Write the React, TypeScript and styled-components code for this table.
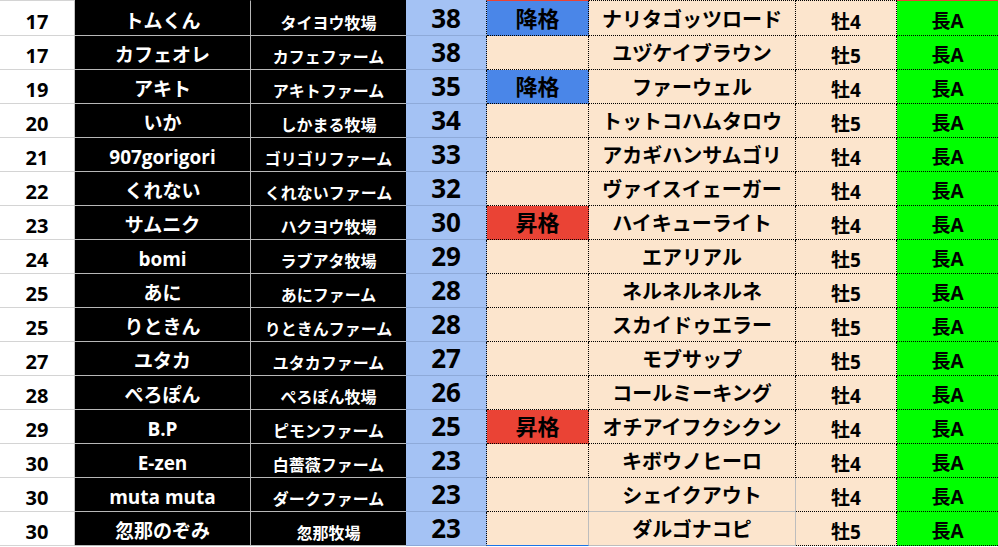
import React from "react";
import styled, { createGlobalStyle, css } from "styled-components";

const GlobalStyle = createGlobalStyle`
  html, body { margin: 0; padding: 0; background: #ffffff; }
  #root { width: 998px; }
`;

type Status = "up" | "down" | undefined;

interface Row {
  rank: number;
  name: string;
  farm: string;
  score: number;
  status?: Status;
  horse: string;
  age: string;
  grade: string;
}

const rows: Row[] = [
  { rank: 17, name: "トムくん", farm: "タイヨウ牧場", score: 38, status: "down", horse: "ナリタゴッツロード", age: "牡4", grade: "長A" },
  { rank: 17, name: "カフェオレ", farm: "カフェファーム", score: 38, horse: "ユヅケイブラウン", age: "牡5", grade: "長A" },
  { rank: 19, name: "アキト", farm: "アキトファーム", score: 35, status: "down", horse: "ファーウェル", age: "牡4", grade: "長A" },
  { rank: 20, name: "いか", farm: "しかまる牧場", score: 34, horse: "トットコハムタロウ", age: "牡5", grade: "長A" },
  { rank: 21, name: "907gorigori", farm: "ゴリゴリファーム", score: 33, horse: "アカギハンサムゴリ", age: "牡4", grade: "長A" },
  { rank: 22, name: "くれない", farm: "くれないファーム", score: 32, horse: "ヴァイスイェーガー", age: "牡4", grade: "長A" },
  { rank: 23, name: "サムニク", farm: "ハクヨウ牧場", score: 30, status: "up", horse: "ハイキューライト", age: "牡4", grade: "長A" },
  { rank: 24, name: "bomi", farm: "ラブアタ牧場", score: 29, horse: "エアリアル", age: "牡5", grade: "長A" },
  { rank: 25, name: "あに", farm: "あにファーム", score: 28, horse: "ネルネルネルネ", age: "牡5", grade: "長A" },
  { rank: 25, name: "りときん", farm: "りときんファーム", score: 28, horse: "スカイドゥエラー", age: "牡5", grade: "長A" },
  { rank: 27, name: "ユタカ", farm: "ユタカファーム", score: 27, horse: "モブサップ", age: "牡5", grade: "長A" },
  { rank: 28, name: "ぺろぽん", farm: "ぺろぽん牧場", score: 26, horse: "コールミーキング", age: "牡4", grade: "長A" },
  { rank: 29, name: "B.P", farm: "ピモンファーム", score: 25, status: "up", horse: "オチアイフクシクン", age: "牡4", grade: "長A" },
  { rank: 30, name: "E-zen", farm: "白薔薇ファーム", score: 23, horse: "キボウノヒーロ", age: "牡4", grade: "長A" },
  { rank: 30, name: "muta muta", farm: "ダークファーム", score: 23, horse: "シェイクアウト", age: "牡4", grade: "長A" },
  { rank: 30, name: "忽那のぞみ", farm: "忽那牧場", score: 23, horse: "ダルゴナコピ", age: "牡5", grade: "長A" },
];

const DOT = "1px dotted #000000";
const PEACH = "#fce5cd";

const Sheet = styled.div`
  display: grid;
  grid-template-columns: 75px 176px 155px 81px 102px 207px 101px 101px;
  width: 998px;
`;

interface CellProps {
  $first?: boolean;
  $last?: boolean;
  $plain?: boolean;
}

const base = css<CellProps>`
  box-sizing: border-box;
  height: ${(p) => (p.$first ? 36 : 34)}px;
  display: flex;
  align-items: flex-end;
  justify-content: center;
  font-family: "Open Sans", "Noto Sans CJK JP", sans-serif;
  font-weight: 700;
  line-height: 1;
  white-space: nowrap;
`;

const RankCell = styled.div<CellProps>`
  ${base};
  background: #ffffff;
  color: #000000;
  font-size: 20px;
  padding-bottom: 3px;
  border-right: 1px solid #c4c4c4;
  border-bottom: 1px solid #d4d4d4;
  border-top: ${(p) => (p.$first ? "1px solid #d4d4d4" : "none")};
`;

const NameCell = styled.div<CellProps>`
  ${base};
  background: #000000;
  color: #ffffff;
  font-size: 19px;
  padding-bottom: 4px;
  border-right: 1px solid #b8b8b8;
  border-bottom: 1px solid #b8b8b8;
  border-top: ${(p) => (p.$first ? "1px solid #000000" : "none")};
`;

const FarmCell = styled.div<CellProps>`
  ${base};
  background: #000000;
  color: #ffffff;
  font-size: 16px;
  padding-bottom: 4px;
  border-bottom: 1px solid #b8b8b8;
  border-top: ${(p) => (p.$first ? "1px solid #000000" : "none")};
`;

const ScoreCell = styled.div<CellProps>`
  ${base};
  background: #a4c2f4;
  color: #000000;
  font-size: 26px;
  padding-bottom: 4px;
  border-right: ${DOT};
  border-bottom: 1px solid #8eaad9;
  border-top: ${(p) => (p.$first ? "1px solid #a4c2f4" : "none")};
`;

const StatusCell = styled.div<CellProps & { $status?: Status }>`
  ${base};
  background: ${(p) => (p.$status === "up" ? "#ea4335" : p.$status === "down" ? "#4a86e8" : PEACH)};
  color: #000000;
  font-size: 22px;
  padding-bottom: 6px;
  border-right: ${(p) => (p.$plain ? "1px solid #bdbdbd" : DOT)};
  border-bottom: ${(p) => (p.$last ? "1px solid #1a73e8" : DOT)};
  border-top: ${(p) => (p.$first ? "1px solid #ea4335" : "none")};
`;

const HorseCell = styled.div<CellProps>`
  ${base};
  background: ${PEACH};
  color: #000000;
  font-size: 20px;
  padding-bottom: 5px;
  border-right: ${(p) => (p.$plain ? "1px solid #bdbdbd" : DOT)};
  border-bottom: ${(p) => (p.$plain ? "1px solid #bdbdbd" : DOT)};
  border-top: ${(p) => (p.$first ? DOT : "none")};
`;

const AgeCell = styled.div<CellProps>`
  ${base};
  background: ${PEACH};
  color: #000000;
  font-size: 19px;
  padding-bottom: 3px;
  border-right: ${DOT};
  border-bottom: ${DOT};
  border-top: ${(p) => (p.$first ? DOT : "none")};
`;

const GradeCell = styled.div<CellProps>`
  ${base};
  background: #00ff00;
  color: #000000;
  font-size: 19px;
  padding-bottom: 4px;
  border-bottom: ${DOT};
  border-top: ${(p) => (p.$first ? "1px solid #ea4335" : "none")};
`;

const statusLabel = (s: Status) => (s === "up" ? "昇格" : s === "down" ? "降格" : null);

export default function App() {
  return (
    <>
      <GlobalStyle />
      <Sheet>
        {rows.map((r, i) => {
          const first = i === 0;
          const last = i === rows.length - 1;
          const plain = i >= rows.length - 2;
          return (
            <React.Fragment key={i}>
              <RankCell $first={first}>{r.rank}</RankCell>
              <NameCell $first={first}>{r.name}</NameCell>
              <FarmCell $first={first}>{r.farm}</FarmCell>
              <ScoreCell $first={first}>{r.score}</ScoreCell>
              <StatusCell $first={first} $last={last} $plain={plain} $status={r.status}>
                {statusLabel(r.status)}
              </StatusCell>
              <HorseCell $first={first} $plain={plain}>{r.horse}</HorseCell>
              <AgeCell $first={first}>{r.age}</AgeCell>
              <GradeCell $first={first}>{r.grade}</GradeCell>
            </React.Fragment>
          );
        })}
      </Sheet>
    </>
  );
}
